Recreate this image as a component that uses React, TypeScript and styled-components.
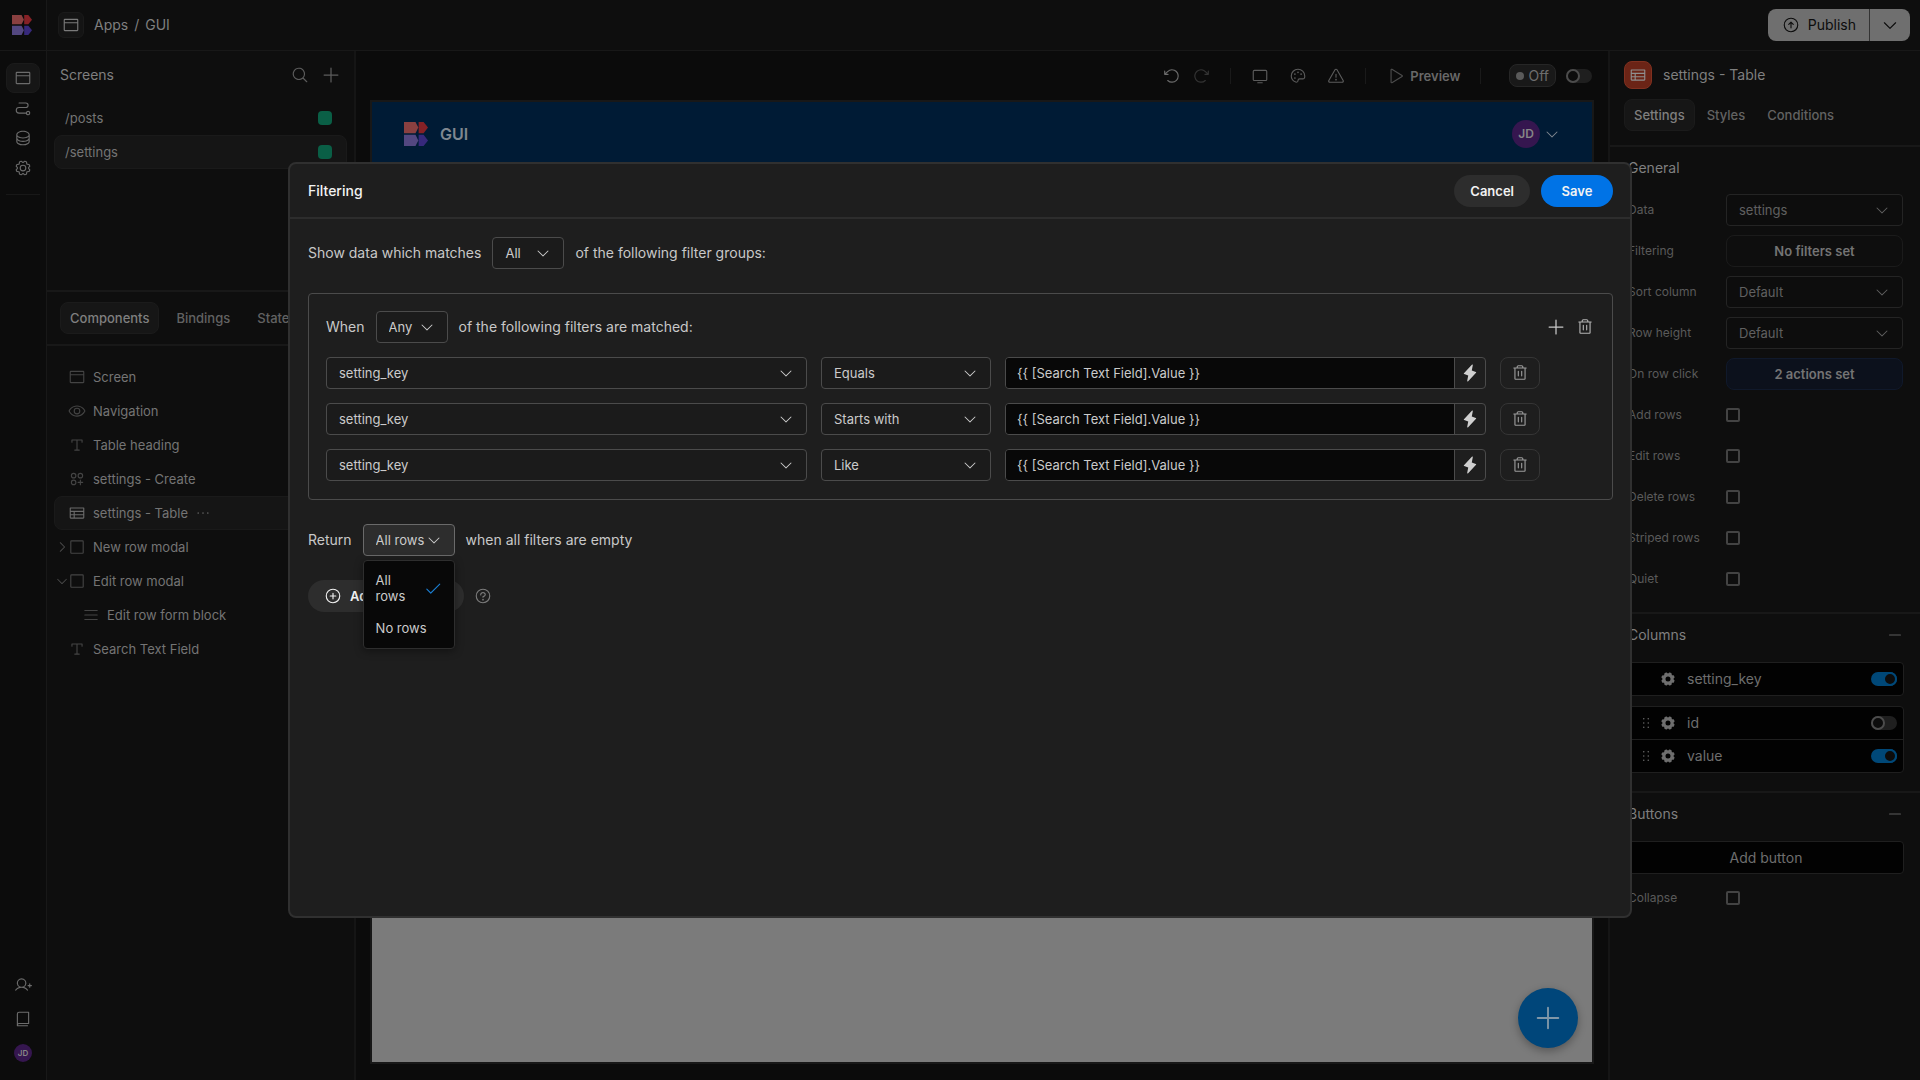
import React from "react";
import styled, { createGlobalStyle } from "styled-components";
import {
  PiArrowClockwise,
  PiArrowCircleUp,
  PiArrowCounterClockwise,
  PiBook,
  PiBrowser,
  PiCaretDown,
  PiCaretRight,
  PiCheck,
  PiCirclesThreePlus,
  PiDatabase,
  PiDotsSixVertical,
  PiDotsThree,
  PiEye,
  PiGear,
  PiGearFill,
  PiLightningFill,
  PiList,
  PiMagnifyingGlass,
  PiMinus,
  PiMonitor,
  PiPalette,
  PiPath,
  PiPlay,
  PiPlus,
  PiPlusCircle,
  PiQuestion,
  PiSquare,
  PiTable,
  PiTextT,
  PiTrash,
  PiUserPlus,
  PiWarning,
} from "react-icons/pi";

const line = "#181818";
const panel = "#0e0e0e";

const GlobalStyle = createGlobalStyle`
  *, *::before, *::after { box-sizing: border-box; }
  body {
    margin: 0;
    background: #0b0b0b;
    color: #7a7a7a;
    font-family: Inter, "Liberation Sans", sans-serif;
    font-size: 14px;
    line-height: 18px;
    overflow: hidden;
  }
  button, input, select { font: inherit; color: inherit; margin: 0; }
  button { cursor: pointer; }
  ul { list-style: none; margin: 0; padding: 0; }
  h1, h2, h3 { font: inherit; margin: 0; }
  svg { display: block; flex: none; }
`;

/* ---------- shared parts ---------- */

const IconButton = styled.button<{ $dim?: boolean; $tone?: string }>`
  display: flex;
  align-items: center;
  justify-content: center;
  padding: 0;
  border: 0;
  background: none;
  color: ${(p) => p.$tone ?? "#5c5c5c"};
  opacity: ${(p) => (p.$dim ? 0.5 : 1)};
`;

const TabButton = styled.button<{ $active?: boolean }>`
  height: 32px;
  padding: 0 9px;
  border: 1px solid ${(p) => (p.$active ? "#1b1b1b" : "transparent")};
  border-radius: 8px;
  background: ${(p) => (p.$active ? "#161616" : "transparent")};
  color: ${(p) => (p.$active ? "#7f7f7f" : "#626262")};
  font-size: 13px;
  font-weight: 500;
`;

const Switch = styled.input.attrs({ type: "checkbox", role: "switch" })`
  appearance: none;
  flex: none;
  display: flex;
  width: 26px;
  height: 14px;
  border-radius: 7px;
  background: #1f1f1f;
  &::before {
    content: "";
    width: 14px;
    height: 14px;
    border: 2px solid #4c4c4c;
    border-radius: 50%;
    background: #0c0c0c;
  }
  &:checked {
    justify-content: flex-end;
    background: #004878;
  }
  &:checked::before { border-color: #004878; }
`;

const Avatar = styled.span<{ $size: number }>`
  display: flex;
  align-items: center;
  justify-content: center;
  width: ${(p) => p.$size}px;
  height: ${(p) => p.$size}px;
  border-radius: 50%;
  background: #35164f;
  color: #868686;
  font-size: ${(p) => (p.$size > 20 ? 12 : 8)}px;
  font-weight: 600;
`;

function Logo({ size }: { size: number }) {
  return (
    <svg width={size} height={size} viewBox="0 0 24 24" aria-hidden="true">
      <path d="M0 0H11.5L14.3 5.6L11.5 11.2H0Z" fill="#8a4040" />
      <path d="M14.6 0H19.6L24 5.6L19.6 11.2H14.6Z" fill="#862126" />
      <path d="M0 12.8H11.5L14.3 18.4L11.5 24H0Z" fill="#534780" />
      <path d="M14.6 12.8H19.6L24 18.4L19.6 24H14.6Z" fill="#37297c" />
    </svg>
  );
}

/* ---------- page frame ---------- */

const Page = styled.div`
  display: flex;
  flex-direction: column;
  height: 100vh;
`;

const TopBar = styled.header`
  display: flex;
  align-items: center;
  height: 51px;
  border-bottom: 1px solid ${line};
  background: ${panel};
`;

const LogoCell = styled.a`
  display: flex;
  align-items: center;
  align-self: stretch;
  width: 47px;
  padding-left: 12px;
  border-right: 1px solid ${line};
  background: #0c0c0c;
`;

const AppBadge = styled.span`
  display: flex;
  align-items: center;
  justify-content: center;
  width: 26px;
  height: 26px;
  margin: 0 10px 0 11px;
  border: 1px solid #1a1a1a;
  border-radius: 6px;
  background: #141414;
`;

const Crumbs = styled.nav`
  display: flex;
  gap: 6px;
  color: #7f7f7f;
  a { color: inherit; text-decoration: none; }
`;

const Publish = styled.div`
  display: flex;
  height: 32px;
  margin: 0 10px 0 auto;
  border-radius: 8px;
  background: #6f6f6f;
  color: #0c0c0c;
  overflow: hidden;
`;

const PublishPart = styled.button`
  display: flex;
  align-items: center;
  gap: 8px;
  padding: 0 13px 0 14px;
  border: 0;
  background: none;
  & + & { padding: 0 11px; border-left: 1px solid #333; }
`;

const Body = styled.div`
  display: flex;
  flex: 1;
  min-height: 0;
`;

/* ---------- rail ---------- */

const Rail = styled.nav`
  display: flex;
  flex-direction: column;
  align-items: center;
  width: 47px;
  padding: 12px 0 18px;
  border-right: 1px solid ${line};
  background: #0c0c0c;
`;

const RailButton = styled.button<{ $active?: boolean }>`
  display: flex;
  align-items: center;
  justify-content: center;
  width: 34px;
  height: 30px;
  padding: 0;
  border: 1px solid ${(p) => (p.$active ? "#1b1b1b" : "transparent")};
  border-radius: 8px;
  background: ${(p) => (p.$active ? "#161616" : "none")};
  color: #6c6c6c;
`;

const RailRule = styled.div`
  width: 34px;
  margin-top: 11px;
  border-top: 1px solid ${line};
`;

const RailFoot = styled.div`
  display: flex;
  flex-direction: column;
  align-items: center;
  gap: 16px;
  margin-top: auto;
`;

/* ---------- left panel ---------- */

const LeftPanel = styled.aside`
  display: flex;
  flex-direction: column;
  width: 309px;
  border-right: 2px solid #151515;
  background: ${panel};
`;

const ScreensArea = styled.section`
  height: 241px;
  padding: 0 7px;
  border-bottom: 2px solid ${line};
`;

const ScreensHead = styled.div`
  display: flex;
  align-items: center;
  gap: 12px;
  height: 50px;
  padding: 0 6px 2px;
  h2 { margin-right: auto; color: #7f7f7f; }
`;

const NavRow = styled.li<{ $active?: boolean }>`
  display: flex;
  align-items: center;
  height: 34px;
  padding: 0 14px 0 10px;
  border: 1px solid ${(p) => (p.$active ? "#1a1a1a" : "transparent")};
  border-radius: 8px;
  background: ${(p) => (p.$active ? "#151515" : "none")};
  color: #747474;
  font-size: 13px;
`;

const AccessDot = styled.span`
  width: 14px;
  height: 14px;
  margin-left: auto;
  border-radius: 4px;
  background: #0a5f46;
`;

const TabBar = styled.div`
  display: flex;
  gap: 7px;
  padding: 10px 13px;
  border-bottom: 2px solid ${line};
`;

const Tree = styled.ul`
  padding: 14px 7px;
`;

const TreeRow = styled(NavRow)<{ $nested?: boolean }>`
  padding-left: ${(p) => (p.$nested ? 14 : 0)}px;
`;

const Twist = styled.span`
  display: flex;
  justify-content: center;
  width: 13px;
  color: #4c4c4c;
`;

const TreeIcon = styled.span<{ $active?: boolean }>`
  display: flex;
  margin-right: 7px;
  color: ${(p) => (p.$active ? "#6a6a6a" : "#444")};
`;

const More = styled(IconButton)`
  margin-left: 6px;
`;

/* ---------- canvas ---------- */

const Canvas = styled.main`
  display: flex;
  flex: 1;
  flex-direction: column;
  min-width: 0;
  padding: 0 14px 16px;
  background: #0b0b0b;
`;

const ToolBar = styled.div`
  display: flex;
  align-items: center;
  justify-content: flex-end;
  gap: 20px;
  height: 49px;
  padding-right: 2px;
`;

const ToolGroup = styled.div`
  display: flex;
  gap: 11px;
`;

const ToolRule = styled.span`
  width: 1px;
  height: 16px;
  background: #1a1a1a;
`;

const PreviewButton = styled(IconButton)`
  gap: 6px;
  font-size: 13px;
  font-weight: 600;
  svg { color: #4c4c4c; }
`;

const LiveToggle = styled.label`
  display: flex;
  align-items: center;
  gap: 10px;
  margin-left: 8px;
`;

const OffTag = styled.span`
  display: flex;
  align-items: center;
  gap: 4px;
  height: 23px;
  padding: 0 6px;
  border: 1px solid #262626;
  border-radius: 8px;
  background: #191919;
  color: #6e6e6e;
  &::before {
    content: "";
    width: 8px;
    height: 8px;
    border-radius: 50%;
    background: #5a5a5a;
  }
`;

const AppFrame = styled.div`
  position: relative;
  flex: 1;
  border: 2px solid #181818;
  background: #7b7b7b;
`;

const AppNav = styled.div`
  display: flex;
  align-items: center;
  gap: 12px;
  height: 64px;
  padding: 0 32px;
  background: #001b35;
  color: #7f8790;
  font-size: 16px;
  font-weight: 600;
`;

const UserMenu = styled(IconButton)`
  gap: 4px;
  margin-left: auto;
`;

const Fab = styled.button`
  position: absolute;
  right: 14px;
  bottom: 14px;
  display: flex;
  align-items: center;
  justify-content: center;
  width: 60px;
  height: 60px;
  padding: 0;
  border: 0;
  border-radius: 50%;
  background: #00467a;
  color: #8097a8;
  box-shadow: 0 3px 8px rgba(0, 0, 0, 0.3);
`;

/* ---------- right panel ---------- */

const RightPanel = styled.aside`
  width: 312px;
  border-left: 2px solid #151515;
  background: ${panel};
`;

const PanelTitle = styled.div`
  display: flex;
  align-items: center;
  gap: 11px;
  padding: 10px 14px;
  color: #7f7f7f;
`;

const TypeBadge = styled.span`
  display: flex;
  align-items: center;
  justify-content: center;
  width: 28px;
  height: 28px;
  border: 1px solid #80301f;
  border-radius: 8px;
  background: #6b2416;
  color: #8f8f8f;
`;

const PanelTabs = styled.div`
  display: flex;
  gap: 2px;
  padding: 0 14px 14px;
  border-bottom: 2px solid ${line};
`;

const Section = styled.section`
  padding: 0 16px 17px 18px;
  & + & { border-top: 2px solid ${line}; }
`;

const SectionHead = styled.div`
  display: flex;
  align-items: center;
  justify-content: space-between;
  height: 41px;
  padding-right: 1px;
  color: #7f7f7f;
`;

const Fields = styled.div`
  display: flex;
  flex-direction: column;
  gap: 9px;
  padding-top: 6px;
`;

const Field = styled.div`
  display: grid;
  grid-template-columns: 98px 1fr;
  align-items: center;
  height: 32px;
  padding-right: 1px;
  color: #5a5a5a;
  font-size: 12px;
`;

const PanelButton = styled.button<{ $blue?: boolean }>`
  height: 32px;
  border: 1px solid ${(p) => (p.$blue ? "#10192b" : "#1b1b1b")};
  border-radius: 8px;
  background: ${(p) => (p.$blue ? "#0c111c" : "none")};
  color: #747474;
  font-size: 13px;
  font-weight: 600;
`;

const Check = styled.input.attrs({ type: "checkbox" })`
  appearance: none;
  width: 14px;
  height: 14px;
  border: 2px solid #434343;
  border-radius: 2px;
`;

const ColumnList = styled.ul`
  margin: 7px 0 10px;
  border: 1px solid #1f1f1f;
  border-radius: 4px;
  background: #020202;
  & + & { margin-bottom: 1px; }
`;

const ColumnRow = styled.li`
  display: flex;
  align-items: center;
  height: 32px;
  padding: 0 6px 0 9px;
  color: #6e6e6e;
  & + & { height: 33px; border-top: 1px solid #1f1f1f; }
  label { flex: 1; margin-left: 11px; }
`;

const DragSlot = styled.span`
  display: flex;
  width: 14px;
  margin-right: 8px;
`;

const AddButton = styled.button`
  display: block;
  width: 100%;
  height: 33px;
  margin: 7px 0 8px;
  border: 1px solid #1f1f1f;
  border-radius: 4px;
  background: #020202;
  color: #6e6e6e;
`;

/* ---------- select ---------- */

const SelectWrap = styled.span<{ $width?: number }>`
  position: relative;
  display: flex;
  align-items: center;
  width: ${(p) => (p.$width ? `${p.$width}px` : "auto")};
  min-width: 0;
`;

const SelectBox = styled.select<{ $dark?: boolean; $open?: boolean }>`
  appearance: none;
  width: 100%;
  height: 32px;
  padding: 0 0 0 12px;
  border: 1px solid ${(p) => (p.$dark ? "#242424" : p.$open ? "#6a6a6a" : "#4b4b4b")};
  border-radius: 4px;
  background: ${(p) => (p.$dark ? "#0d0d0d" : p.$open ? "#2d2d2d" : "#1b1b1b")};
  color: ${(p) => (p.$dark ? "#606060" : "#cbcbcb")};
  font-size: 13px;
`;

const SelectCaret = styled(PiCaretDown)<{ $dark?: string }>`
  position: absolute;
  right: 13px;
  color: ${(p) => (p.$dark ? "#606060" : "#cbcbcb")};
  pointer-events: none;
`;

interface PickerProps {
  id?: string;
  label: string;
  options: string[];
  width?: number;
  dark?: boolean;
  open?: boolean;
  children?: React.ReactNode;
}

function Picker({ id, label, options, width, dark, open, children }: PickerProps) {
  return (
    <SelectWrap $width={width}>
      <SelectBox id={id} aria-label={label} $dark={dark} $open={open}>
        {options.map((o) => (
          <option key={o}>{o}</option>
        ))}
      </SelectBox>
      <SelectCaret size={16} $dark={dark ? "yes" : undefined} />
      {children}
    </SelectWrap>
  );
}

/* ---------- modal ---------- */

const Overlay = styled.div`
  position: fixed;
  inset: 0;
  display: flex;
  align-items: center;
  justify-content: center;
`;

const Modal = styled.div`
  width: 70vw;
  height: 70vh;
  border: 2px solid #303030;
  border-radius: 8px;
  background: #1e1e1e;
  color: #c8c8c8;
`;

const ModalHead = styled.header`
  display: flex;
  align-items: center;
  gap: 11px;
  height: 55px;
  padding: 0 17px 0 18px;
  border-bottom: 2px solid #2d2d2d;
  h1 { margin-right: auto; color: #f2f2f2; font-weight: 500; }
`;

const PillButton = styled.button<{ $primary?: boolean }>`
  display: flex;
  align-items: center;
  justify-content: center;
  gap: 8px;
  min-width: 72px;
  height: 32px;
  padding: 0 16px;
  border: 0;
  border-radius: 16px;
  background: ${(p) => (p.$primary ? "#0073e6" : "#2d2d2d")};
  color: #f2f2f2;
  font-size: 13px;
  font-weight: 600;
`;

const ModalBody = styled.div`
  display: flex;
  flex-direction: column;
  gap: 24px;
  padding: 18px 17px 18px 18px;
`;

const Sentence = styled.div`
  display: flex;
  align-items: center;
  gap: 11px;
`;

const Group = styled.section`
  display: flex;
  flex-direction: column;
  gap: 14px;
  padding: 17px 18px 18px 17px;
  border: 1px solid #4b4b4b;
  border-radius: 4px;
`;

const GroupTools = styled.div`
  display: flex;
  align-items: center;
  gap: 10px;
  margin-left: auto;
`;

const FilterRow = styled.div`
  display: grid;
  grid-template-columns: 1fr 170px 1fr 40px 40px;
  gap: 14px;
`;

const Binding = styled.div`
  display: flex;
  height: 32px;
  border: 1px solid #4b4b4b;
  border-radius: 4px;
  overflow: hidden;
`;

const BindingInput = styled.input`
  flex: 1;
  min-width: 0;
  padding: 0 11px;
  border: 0;
  background: #080808;
  color: #cbcbcb;
  font-size: 13px;
`;

const BindingButton = styled(IconButton)`
  width: 31px;
  border-left: 1px solid #4b4b4b;
`;

const DeleteButton = styled(IconButton)`
  height: 32px;
  border: 1px solid #353535;
  border-radius: 8px;
`;

const Popover = styled.ul`
  position: absolute;
  top: 36px;
  left: 0;
  z-index: 1;
  width: 100%;
  padding: 3px 0 4px;
  border: 1px solid #2e2e2e;
  border-radius: 4px;
  background: #080808;
  box-shadow: 0 2px 8px rgba(0, 0, 0, 0.4);
`;

const Option = styled.li`
  display: flex;
  align-items: center;
  justify-content: space-between;
  gap: 18px;
  padding: 8px 12px;
  color: #cbcbcb;
  font-size: 13px;
  line-height: 16px;
`;

const FootRow = styled.div`
  display: flex;
  align-items: center;
  gap: 10px;
`;

/* ---------- content ---------- */

const tree = [
  { icon: PiBrowser, text: "Screen" },
  { icon: PiEye, text: "Navigation" },
  { icon: PiTextT, text: "Table heading" },
  { icon: PiCirclesThreePlus, text: "settings - Create" },
  { icon: PiTable, text: "settings - Table", active: true },
  { icon: PiSquare, text: "New row modal", twist: PiCaretRight },
  { icon: PiSquare, text: "Edit row modal", twist: PiCaretDown },
  { icon: PiList, text: "Edit row form block", nested: true },
  { icon: PiTextT, text: "Search Text Field" },
];

const rail = [
  { icon: PiBrowser, name: "Design", active: true },
  { icon: PiPath, name: "Automations" },
  { icon: PiDatabase, name: "Data" },
  { icon: PiGear, name: "App settings" },
];

const toggles = ["Add rows", "Edit rows", "Delete rows", "Striped rows", "Quiet"];
const filters = ["Equals", "Starts with", "Like"];

function FilterModal() {
  return (
    <Overlay>
      <Modal role="dialog" aria-modal="true" aria-labelledby="modal-title">
        <ModalHead>
          <h1 id="modal-title">Filtering</h1>
          <PillButton>Cancel</PillButton>
          <PillButton $primary>Save</PillButton>
        </ModalHead>
        <ModalBody>
          <Sentence>
            <span>Show data which matches</span>
            <Picker label="Group match" options={["All", "Any"]} width={72} />
            <span>of the following filter groups:</span>
          </Sentence>
          <Group>
            <Sentence>
              <span>When</span>
              <Picker label="Filter match" options={["Any", "All"]} width={72} />
              <span>of the following filters are matched:</span>
              <GroupTools>
                <IconButton $tone="#c8c8c8" aria-label="Add filter">
                  <PiPlus size={20} />
                </IconButton>
                <IconButton $tone="#b4b4b4" aria-label="Delete group">
                  <PiTrash size={18} />
                </IconButton>
              </GroupTools>
            </Sentence>
            {filters.map((f) => (
              <FilterRow key={f}>
                <Picker label="Column" options={["setting_key", "id", "value"]} />
                <Picker label="Operator" options={[f]} />
                <Binding>
                  <BindingInput aria-label="Value" defaultValue="{{ [Search Text Field].Value }}" />
                  <BindingButton $tone="#cfcfcf" aria-label="Edit binding">
                    <PiLightningFill size={18} />
                  </BindingButton>
                </Binding>
                <DeleteButton $tone="#9c9c9c" aria-label="Delete filter">
                  <PiTrash size={18} />
                </DeleteButton>
              </FilterRow>
            ))}
          </Group>
          <Sentence>
            <span>Return</span>
            <Picker label="Rows when empty" options={["All rows", "No rows"]} width={92} open>
              <Popover role="listbox" aria-label="Rows when empty">
                <Option role="option" aria-selected="true">
                  <span>All rows</span>
                  <PiCheck size={18} color="#1a7fd4" />
                </Option>
                <Option role="option" aria-selected="false">
                  No rows
                </Option>
              </Popover>
            </Picker>
            <span>when all filters are empty</span>
          </Sentence>
          <FootRow>
            <PillButton>
              <PiPlusCircle size={18} />
              Add filter group
            </PillButton>
            <IconButton $tone="#7c7c7c" aria-label="Help">
              <PiQuestion size={18} />
            </IconButton>
          </FootRow>
        </ModalBody>
      </Modal>
    </Overlay>
  );
}

function SettingsPanel() {
  return (
    <RightPanel>
      <PanelTitle>
        <TypeBadge>
          <PiTable size={18} />
        </TypeBadge>
        <h2>settings - Table</h2>
      </PanelTitle>
      <PanelTabs>
        <TabButton $active>Settings</TabButton>
        <TabButton>Styles</TabButton>
        <TabButton>Conditions</TabButton>
      </PanelTabs>
      <Section>
        <SectionHead>
          <h3>General</h3>
        </SectionHead>
        <Fields>
          <Field>
            <label htmlFor="data">Data</label>
            <Picker id="data" label="Data" options={["settings"]} dark />
          </Field>
          <Field>
            <span>Filtering</span>
            <PanelButton>No filters set</PanelButton>
          </Field>
          <Field>
            <label htmlFor="sort">Sort column</label>
            <Picker id="sort" label="Sort column" options={["Default"]} dark />
          </Field>
          <Field>
            <label htmlFor="height">Row height</label>
            <Picker id="height" label="Row height" options={["Default"]} dark />
          </Field>
          <Field>
            <span>On row click</span>
            <PanelButton $blue>2 actions set</PanelButton>
          </Field>
          {toggles.map((t) => (
            <Field key={t}>
              <label htmlFor={t}>{t}</label>
              <Check id={t} />
            </Field>
          ))}
        </Fields>
      </Section>
      <Section>
        <SectionHead>
          <h3>Columns</h3>
          <IconButton aria-label="Collapse columns">
            <PiMinus size={16} />
          </IconButton>
        </SectionHead>
        <ColumnList>
          <ColumnRow>
            <DragSlot />
            <PiGearFill size={16} />
            <label htmlFor="col-key">setting_key</label>
            <Switch id="col-key" defaultChecked />
          </ColumnRow>
        </ColumnList>
        <ColumnList>
          {["id", "value"].map((c) => (
            <ColumnRow key={c}>
              <DragSlot>
                <PiDotsSixVertical size={16} />
              </DragSlot>
              <PiGearFill size={16} />
              <label htmlFor={`col-${c}`}>{c}</label>
              <Switch id={`col-${c}`} defaultChecked={c === "value"} />
            </ColumnRow>
          ))}
        </ColumnList>
      </Section>
      <Section>
        <SectionHead>
          <h3>Buttons</h3>
          <IconButton aria-label="Collapse buttons">
            <PiMinus size={16} />
          </IconButton>
        </SectionHead>
        <AddButton>Add button</AddButton>
        <Field>
          <label htmlFor="collapse">Collapse</label>
          <Check id="collapse" />
        </Field>
      </Section>
    </RightPanel>
  );
}

export default function App() {
  return (
    <>
      <GlobalStyle />
      <Page>
        <TopBar>
          <LogoCell href="#" aria-label="Home">
            <Logo size={20} />
          </LogoCell>
          <AppBadge>
            <PiBrowser size={18} />
          </AppBadge>
          <Crumbs>
            <a href="#apps">Apps</a>
            <span>/</span>
            <span>GUI</span>
          </Crumbs>
          <Publish>
            <PublishPart>
              <PiArrowCircleUp size={18} />
              Publish
            </PublishPart>
            <PublishPart aria-label="Publish options">
              <PiCaretDown size={18} />
            </PublishPart>
          </Publish>
        </TopBar>
        <Body>
          <Rail>
            {rail.map(({ icon: Icon, name, active }) => (
              <RailButton key={name} $active={active} aria-label={name}>
                <Icon size={18} />
              </RailButton>
            ))}
            <RailRule />
            <RailFoot>
              <IconButton $tone="#6c6c6c" aria-label="Invite">
                <PiUserPlus size={18} />
              </IconButton>
              <IconButton $tone="#6c6c6c" aria-label="Docs">
                <PiBook size={18} />
              </IconButton>
              <Avatar $size={18}>JD</Avatar>
            </RailFoot>
          </Rail>
          <LeftPanel>
            <ScreensArea>
              <ScreensHead>
                <h2>Screens</h2>
                <IconButton aria-label="Search screens">
                  <PiMagnifyingGlass size={18} />
                </IconButton>
                <IconButton aria-label="Add screen">
                  <PiPlus size={20} />
                </IconButton>
              </ScreensHead>
              <ul>
                <NavRow>
                  /posts
                  <AccessDot />
                </NavRow>
                <NavRow $active>
                  /settings
                  <AccessDot />
                </NavRow>
              </ul>
            </ScreensArea>
            <TabBar>
              <TabButton $active>Components</TabButton>
              <TabButton>Bindings</TabButton>
              <TabButton>State</TabButton>
            </TabBar>
            <Tree>
              {tree.map(({ icon: Icon, text, active, twist: TwistIcon, nested }) => (
                <TreeRow key={text} $active={active} $nested={nested}>
                  <Twist>{TwistIcon && <TwistIcon size={14} />}</Twist>
                  <TreeIcon $active={active}>
                    <Icon size={18} />
                  </TreeIcon>
                  {text}
                  {active && (
                    <More aria-label="More">
                      <PiDotsThree size={18} />
                    </More>
                  )}
                </TreeRow>
              ))}
            </Tree>
          </LeftPanel>
          <Canvas>
            <ToolBar>
              <ToolGroup>
                <IconButton $tone="#6c6c6c" aria-label="Undo">
                  <PiArrowCounterClockwise size={18} />
                </IconButton>
                <IconButton $dim aria-label="Redo">
                  <PiArrowClockwise size={18} />
                </IconButton>
              </ToolGroup>
              <ToolRule />
              <IconButton aria-label="Desktop view">
                <PiMonitor size={18} />
              </IconButton>
              <IconButton aria-label="Theme">
                <PiPalette size={18} />
              </IconButton>
              <IconButton aria-label="Errors">
                <PiWarning size={18} />
              </IconButton>
              <ToolRule />
              <PreviewButton $tone="#686868">
                <PiPlay size={18} />
                Preview
              </PreviewButton>
              <ToolRule />
              <LiveToggle>
                <OffTag>Off</OffTag>
                <Switch />
              </LiveToggle>
            </ToolBar>
            <AppFrame>
              <AppNav>
                <Logo size={24} />
                <span>GUI</span>
                <UserMenu $tone="#7f8790" aria-label="User menu">
                  <Avatar $size={28}>JD</Avatar>
                  <PiCaretDown size={16} />
                </UserMenu>
              </AppNav>
              <Fab aria-label="Add">
                <PiPlus size={30} />
              </Fab>
            </AppFrame>
          </Canvas>
          <SettingsPanel />
        </Body>
      </Page>
      <FilterModal />
    </>
  );
}
